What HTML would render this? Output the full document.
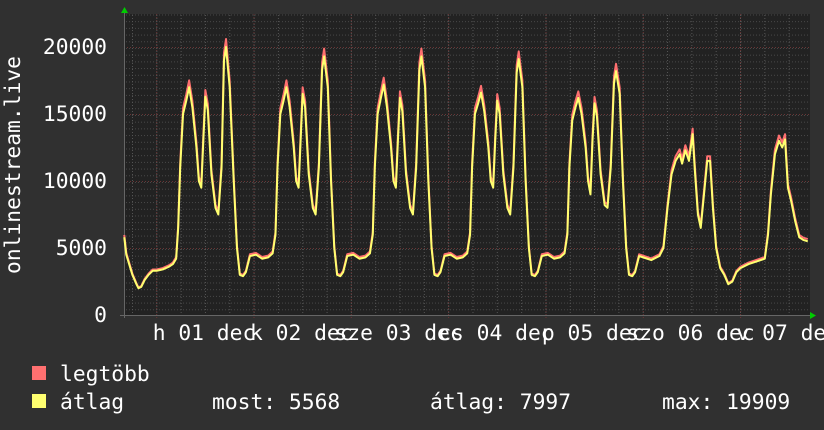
<!DOCTYPE html>
<html><head><meta charset="utf-8"><style>
html,body{margin:0;padding:0;background:#303030;}
svg{display:block}
text{font-family:"DejaVu Sans Mono","Liberation Mono",monospace;fill:#fff;}
</style></head><body>
<svg width="824" height="430" viewBox="0 0 824 430" xmlns="http://www.w3.org/2000/svg">
<rect width="824" height="430" fill="#303030"/>
<rect x="124" y="14" width="686" height="301" fill="#222"/>
<defs>
<pattern id="vmin" x="132" y="0" width="24.32" height="430" patternUnits="userSpaceOnUse">
<line x1="0.5" y1="0" x2="0.5" y2="430" stroke="#555" stroke-dasharray="1,2"/>
</pattern>
<pattern id="hmin" x="0" y="14.5" width="824" height="6.7" patternUnits="userSpaceOnUse">
<line x1="0" y1="0.5" x2="824" y2="0.5" stroke="#4a4a4a" stroke-dasharray="1,2"/>
</pattern>
</defs>
<rect x="124" y="14" width="686" height="301" fill="url(#hmin)"/>
<rect x="124" y="14" width="686" height="301" fill="url(#vmin)"/>
<g stroke="#6a3535" stroke-dasharray="1,2">
<line x1="124" y1="47.5" x2="810" y2="47.5"/>
<line x1="124" y1="114.5" x2="810" y2="114.5"/>
<line x1="124" y1="181.5" x2="810" y2="181.5"/>
<line x1="124" y1="248.5" x2="810" y2="248.5"/>
<line x1="156.7" y1="14" x2="156.7" y2="318"/>
<line x1="254" y1="14" x2="254" y2="318"/>
<line x1="351.3" y1="14" x2="351.3" y2="318"/>
<line x1="448.6" y1="14" x2="448.6" y2="318"/>
<line x1="546" y1="14" x2="546" y2="318"/>
<line x1="643.3" y1="14" x2="643.3" y2="318"/>
<line x1="740.6" y1="14" x2="740.6" y2="318"/>
</g>
<line x1="120" y1="315.5" x2="812" y2="315.5" stroke="#666"/>
<line x1="124.5" y1="10" x2="124.5" y2="318" stroke="#666"/>
<polygon points="121,13 124.5,7 128,13" fill="#0c0"/>
<polygon points="810,312 816,315.5 810,319" fill="#0c0"/>

<defs>
<path id="d" fill="none" stroke-linejoin="round" vector-effect="non-scaling-stroke" d="M-8,5.8 L-7.5,4.5 -6.8,3.8 -6,3 -5,2.3 -4.5,2 -3.8,2.1 -3,2.6 -2,3 -1,3.3 0,3.3 1.5,3.4 3,3.6 4,3.8 4.8,4.2 5.3,6.5 5.8,11 6.5,15 7.3,16 8,17 8.8,15.5 9.8,12.5 10.4,10 11,9.5 11.5,13 12,16.3 12.6,15.3 13.5,10.5 14.5,8 15.2,7.5 16,11 16.6,19 17.1,20 18,17 19,10 19.8,5 20.5,3 21.3,2.9 22,3.2 23,4.4
L24.5,4.5 26,4.2 27.5,4.3 28.6,4.6 29.3,6 29.8,11 30.5,15 31.3,16 32,17 32.8,15.5 33.8,12.5 34.4,10 35,9.5 35.5,13 36,16.5 36.6,15.5 37.5,10.5 38.5,8 39.2,7.5 40,11 40.8,18.3 41.3,19.3 42.2,17 43,10 43.8,5 44.5,3 45.3,2.9 46,3.2 47,4.4
L48.5,4.5 50,4.2 51.5,4.3 52.6,4.6 53.3,6 53.8,11 54.5,15 55.3,16.2 56,17.2 56.8,15.5 57.8,12.5 58.4,10 59,9.5 59.5,13 60,16.2 60.6,15.2 61.5,10.5 62.5,8 63.2,7.5 64,11 64.8,18.3 65.3,19.3 66.2,17 67,10 67.8,5 68.5,3 69.3,2.9 70,3.2 71,4.4
L72.5,4.5 74,4.2 75.5,4.3 76.6,4.6 77.3,6 77.8,11 78.5,15 79.3,15.8 80,16.6 80.8,15.2 81.8,12.5 82.4,10 83,9.5 83.5,13 84,16 84.6,15 85.5,10.5 86.5,8 87.2,7.5 88,11 88.8,18.1 89.3,19.1 90.2,17 91,10 91.8,5 92.5,3 93.3,2.9 94,3.2 95,4.4
L96.5,4.5 98,4.2 99.5,4.3 100.6,4.6 101.3,6 101.8,11 102.5,14.5 103.3,15.5 104,16.2 104.8,15 105.8,12.5 106.4,10 107,9 107.5,13 108,15.8 108.6,14.8 109.5,10.5 110.5,8.2 111.2,8 112,11 112.8,17.3 113.3,18.2 114.2,16.5 115,10 115.8,5 116.5,3 117.3,2.9 118,3.2 119,4.4
L120,4.3 122,4.1 124,4.4 125,5 126,8 127,10.5 128,11.5 129,12 129.6,11.3 130.4,12.3 131.3,11.5 132.2,13.5 132.7,11 133.5,7.5 134.2,6.5 135,9 135.8,11.5 136.5,11.5 137.2,8 138,5 139,3.5 140,3 141,2.3 142,2.5 143,3.2 144,3.5 146,3.8 148,4 150,4.2 150.8,6 151.5,9 152.5,12 153.5,13 154.3,12.5 155,13.1 155.7,9.5 156.5,8.5 157.5,7 158.5,5.8 159.5,5.6 160.6,5.5"/>
</defs>
<g transform="translate(156.7,315) scale(4.054,-13.4) scale(1,1.03)">
<use href="#d" stroke="#ff7070" stroke-width="2" fill="none"/>
</g>
<g transform="translate(156.7,315) scale(4.054,-13.4)">
<use href="#d" stroke="#ffff70" stroke-width="2" fill="none"/>
</g>

<g font-size="21.3" text-anchor="end">
<text x="107" y="54">20000</text>
<text x="107" y="121">15000</text>
<text x="107" y="188">10000</text>
<text x="107" y="255">5000</text>
<text x="107" y="322">0</text>
</g>
<text font-size="21.3" transform="translate(20,165) rotate(-90)" text-anchor="middle">onlinestream.live</text>
<g font-size="21.3" text-anchor="middle">
<text x="204" y="340">h 01 dec</text>
<text x="301.3" y="340">k 02 dec</text>
<text x="398.6" y="340">sze 03 dec</text>
<text x="495.9" y="340">cs 04 dec</text>
<text x="593.2" y="340">p 05 dec</text>
<text x="690.5" y="340">szo 06 dec</text>
<text x="787.8" y="340">v 07 dec</text>
</g>
<rect x="32" y="366" width="14" height="14" fill="#ff7070"/>
<rect x="32" y="394" width="14" height="14" fill="#ffff70"/>
<g font-size="21.3">
<text x="60" y="381">legtöbb</text>
<text x="60" y="409">átlag</text>
<text x="212" y="409">most: 5568</text>
<text x="430" y="409">átlag: 7997</text>
<text x="662" y="409">max: 19909</text>
</g>
</svg>
</body></html>
